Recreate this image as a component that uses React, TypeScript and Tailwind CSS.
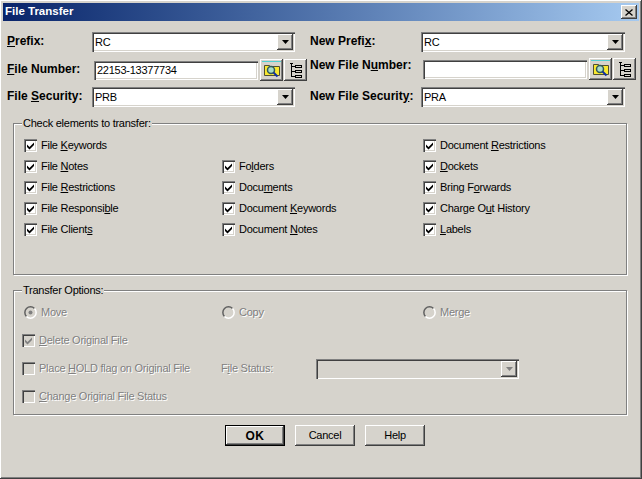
const raised = 'shadow-[inset_-1px_-1px_0_#404040,inset_1px_1px_0_#ffffff,inset_-2px_-2px_0_#808080]'
const sunken = 'shadow-[inset_1px_1px_0_#808080,inset_2px_2px_0_#404040,inset_-1px_-1px_0_#ffffff,inset_-2px_-2px_0_#d6d3cc]'
const disabledText = 'text-[#808080] [text-shadow:1px_1px_0_#ffffff]'
const fieldText = 'font-normal text-[11px] tracking-[-0.25px]'

function U({ children }: { children: string }) {
  return <span className="underline underline-offset-1">{children}</span>
}

function Arrow({ disabled }: { disabled?: boolean }) {
  return (
    <svg width="7" height="4" viewBox="0 0 7 4">
      <path d="M0 0h7L3.500 4z" fill={disabled ? '#808080' : '#000000'} />
    </svg>
  )
}

function Combo({ value, className }: { value?: string; className: string }) {
  return (
    <div className={`${sunken} ${className} h-[20px] flex items-center pl-[3px] pr-[2px] bg-white text-black`}>
      <span className="flex-1">{value}</span>
      <div className={`${raised} w-[16px] h-[16px] bg-[#d6d3cc] flex items-center justify-center`}>
        <Arrow />
      </div>
    </div>
  )
}

function SearchIcon() {
  return (
    <svg width="21" height="18" viewBox="0 0 21 18">
      <path d="M1 0h19v1H1z" fill="#50d0d0" />
      <path d="M3.500 4.500h5l1 1h9v9h-15z" fill="#f8e830" stroke="#505030" strokeWidth="1" />
      <circle cx="10" cy="9" r="3.500" fill="#a8dcc8" stroke="#305858" strokeWidth="1.500" />
      <path d="M12.500 11.500l4 4" stroke="#1030a0" strokeWidth="2" />
    </svg>
  )
}

function TreeIcon() {
  return (
    <svg width="16" height="17" viewBox="0 0 16 17" fill="none" stroke="#000000" strokeWidth="1" shapeRendering="crispEdges">
      <path d="M3.500 1v14M3.500 4.500h4M3.500 9.500h4M3.500 14.500h4" />
      <path d="M1.500 1.500h3M7.500 3.500h6v2h-6zM7.500 8.500h6v2h-6zM7.500 13.500h6v2h-6z" />
    </svg>
  )
}

function FileField({ value, className }: { value?: string; className: string }) {
  return (
    <div className="flex items-center">
      <div className={`${sunken} ${className} h-[19px] bg-white pl-[3px] leading-[19px] text-black`}>{value}</div>
      <div className={`${raised} ml-[2px] w-[23px] h-[22px] flex items-center justify-center`}>
        <SearchIcon />
      </div>
      <div className={`${raised} ml-[1px] w-[23px] h-[22px] flex items-center justify-center`}>
        <TreeIcon />
      </div>
    </div>
  )
}

function Check({ label, disabled, on = true }: { label: React.ReactNode; disabled?: boolean; on?: boolean }) {
  return (
    <div className="flex items-center h-[21px]">
      <div className={`${sunken} w-[13px] h-[13px] flex items-center justify-center ${disabled ? 'bg-[#d6d3cc]' : 'bg-white'}`}>
        {on && (
          <svg width="9" height="9" viewBox="0 0 9 9">
            <path d="M1 3.500l2.500 2.500L8 1.500v2.500L3.500 8.500 1 6z" fill={disabled ? '#808080' : '#000000'} />
          </svg>
        )}
      </div>
      <span className={`ml-[4px] ${disabled ? disabledText : 'text-black'}`}>{label}</span>
    </div>
  )
}

function Radio({ label, on }: { label: string; on?: boolean }) {
  return (
    <div className="flex items-center h-[21px]">
      <svg width="13" height="13" viewBox="0 0 13 13" fill="none">
        <path d="M10.500 2.500A5.500 5.500 0 0 0 2.500 10.500" stroke="#606060" strokeWidth="1.500" />
        <path d="M2.500 10.500A5.500 5.500 0 0 0 10.500 2.500" stroke="#ffffff" strokeWidth="1.500" />
        {on && <circle cx="6.500" cy="6.500" r="2" fill="#808080" />}
      </svg>
      <span className={`ml-[4px] ${disabledText}`}>{label}</span>
    </div>
  )
}

function Group({ title, className, children }: { title: string; className: string; children: React.ReactNode }) {
  return (
    <div className={`relative border border-[#808080] shadow-[inset_1px_1px_0_#ffffff,1px_1px_0_#ffffff] ${className}`}>
      <span className="absolute left-[8px] top-[-8px] bg-[#d6d3cc] px-[1px] leading-[14px] text-black">{title}</span>
      {children}
    </div>
  )
}

function Button({ children, primary }: { children: React.ReactNode; primary?: boolean }) {
  if (primary) {
    return (
      <div className="w-[60px] h-[21px] border border-black shadow-[inset_-1px_-1px_0_#404040,inset_1px_1px_0_#ffffff,inset_-2px_-2px_0_#808080] flex items-center justify-center font-bold text-[12px] tracking-[0.5px] text-black">
        {children}
      </div>
    )
  }
  return <div className={`${raised} w-[60px] h-[21px] flex items-center justify-center text-black`}>{children}</div>
}

export default function App() {
  return (
    <div className="w-[642px] h-[479px] bg-[#d6d3cc] p-[3px] shadow-[inset_-1px_-1px_0_#404040,inset_1px_1px_0_#ffffff,inset_-2px_-2px_0_#808080] text-[11px] tracking-[-0.25px] font-['Liberation_Sans',Arial,sans-serif]">
      {/* Title bar */}
      <div className="h-[18px] flex items-center justify-between pl-[2px] pr-[2px] bg-gradient-to-r from-[#0a246a] to-[#a6caf0]">
        <span className="font-bold text-[11.5px] tracking-normal text-white">File Transfer</span>
        <div className={`${raised} w-[16px] h-[14px] bg-[#d6d3cc] flex items-center justify-center`}>
          <svg width="8" height="7" viewBox="0 0 8 7">
            <path d="M0.500 0.500l7 6M7.500 0.500l-7 6" stroke="#000000" strokeWidth="1.300" />
          </svg>
        </div>
      </div>

      {/* Top fields */}
      <div className="flex pl-[4px] pt-[11px] h-[99px] text-[12px] font-bold tracking-normal text-black">
        <div className="w-[303px]">
          <div className="flex items-center">
            <span className="w-[85px] -mt-[2px]"><U>P</U>refix:</span>
            <Combo value="RC" className={`w-[203px] ${fieldText}`} />
          </div>
          <div className="flex items-center mt-[7px]">
            <span className="w-[87px] -mt-[3px]"><U>F</U>ile Number:</span>
            <FileField value="22153-13377734" className={`w-[164px] ${fieldText}`} />
          </div>
          <div className="flex items-center mt-[6px]">
            <span className="w-[85px] -mt-[2px]">File <U>S</U>ecurity:</span>
            <Combo value="PRB" className={`w-[203px] ${fieldText}`} />
          </div>
        </div>
        <div className="flex-1">
          <div className="flex items-center">
            <span className="w-[111px] -mt-[2px]">New Prefi<U>x</U>:</span>
            <Combo value="RC" className={`w-[204px] ${fieldText}`} />
          </div>
          <div className="flex items-center mt-[6px]">
            <span className="w-[113px] -mt-[9px]">New File N<U>u</U>mber:</span>
            <FileField className="w-[164px]" />
          </div>
          <div className="flex items-center mt-[7px]">
            <span className="w-[111px] -mt-[2px]">New File Securit<U>y</U>:</span>
            <Combo value="PRA" className={`w-[204px] ${fieldText}`} />
          </div>
        </div>
      </div>

      {/* Elements group */}
      <Group title="Check elements to transfer:" className="ml-[10px] mt-[3px] w-[614px] h-[152px] pl-[10px] pt-[11px]">
        <div className="grid grid-cols-[198px_201px_1fr]">
          <div>
            <Check label={<>File <U>K</U>eywords</>} />
            <Check label={<>File <U>N</U>otes</>} />
            <Check label={<>File <U>R</U>estrictions</>} />
            <Check label={<>File Responsi<U>b</U>le</>} />
            <Check label={<>File Client<U>s</U></>} />
          </div>
          <div className="pt-[21px]">
            <Check label={<>Fo<U>l</U>ders</>} />
            <Check label={<>Docu<U>m</U>ents</>} />
            <Check label={<>Document <U>K</U>eywords</>} />
            <Check label={<>Document <U>N</U>otes</>} />
          </div>
          <div>
            <Check label={<>Document <U>R</U>estrictions</>} />
            <Check label={<><U>D</U>ockets</>} />
            <Check label={<>Bring F<U>o</U>rwards</>} />
            <Check label={<>Charge O<U>u</U>t History</>} />
            <Check label={<><U>L</U>abels</>} />
          </div>
        </div>
      </Group>

      {/* Transfer options group */}
      <Group title="Transfer Options:" className="ml-[10px] mt-[15px] w-[614px] h-[125px] pl-[10px] pt-[11px]">
        <div className="grid grid-cols-[198px_201px_1fr]">
          <Radio label="Move" on />
          <Radio label="Copy" />
          <Radio label="Merge" />
        </div>
        <div className="-ml-[2px] mt-[7px]">
          <Check disabled label={<><U>D</U>elete Original File</>} />
          <div className="flex items-center mt-[7px]">
            <div className="w-[199px]">
              <Check disabled on={false} label={<>Place <U>H</U>OLD flag on Original File</>} />
            </div>
            <span className={`w-[95px] ${disabledText}`}>F<U>i</U>le Status:</span>
            <div className={`${sunken} w-[203px] h-[20px] flex items-center justify-end pr-[2px]`}>
              <div className={`${raised} w-[16px] h-[16px] flex items-center justify-center`}>
                <Arrow disabled />
              </div>
            </div>
          </div>
          <div className="mt-[7px]">
            <Check disabled on={false} label={<><U>C</U>hange Original File Status</>} />
          </div>
        </div>
      </Group>

      {/* Buttons */}
      <div className="flex gap-[10px] pl-[222px] mt-[10px]">
        <Button primary>OK</Button>
        <Button>Cancel</Button>
        <Button>Help</Button>
      </div>
    </div>
  )
}
